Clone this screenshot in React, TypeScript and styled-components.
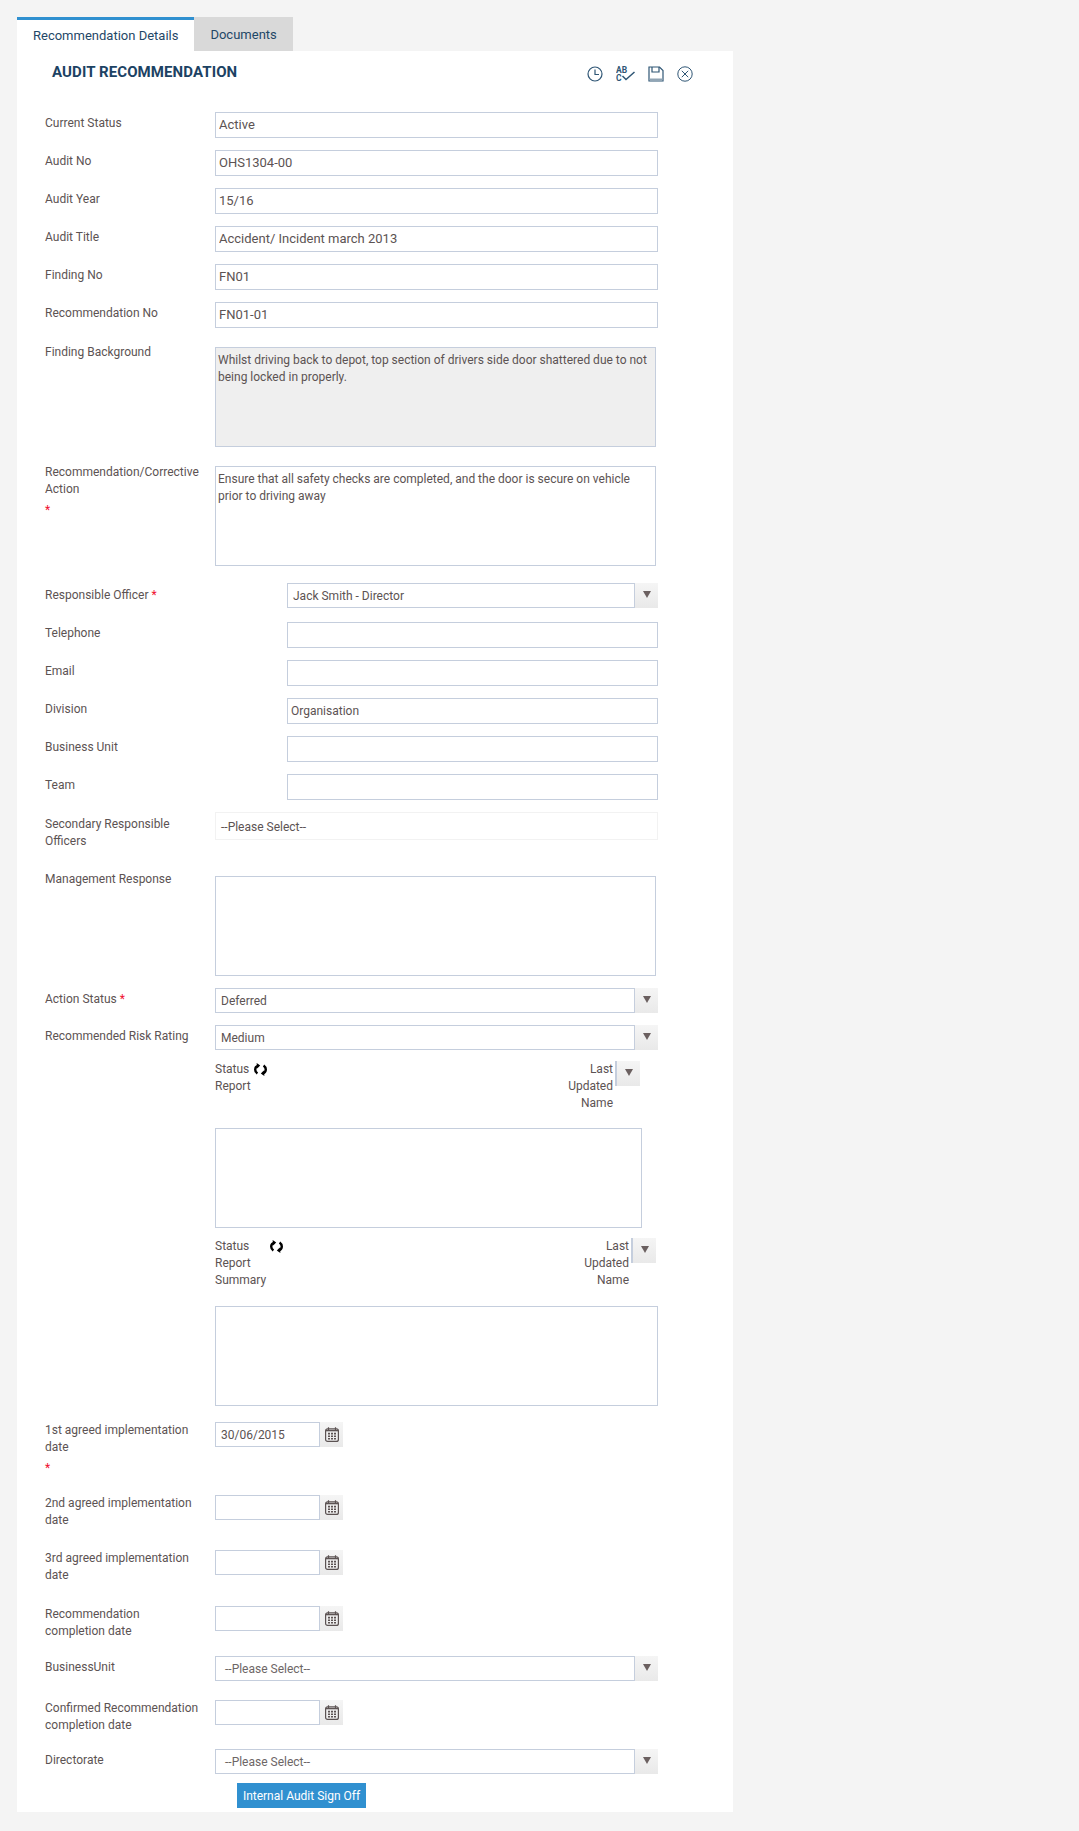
import styled, { createGlobalStyle } from "styled-components";

const GlobalStyle = createGlobalStyle`
  html, body {
    margin: 0;
    background: #f4f4f4;
    font-family: Roboto, "Liberation Sans", sans-serif;
    font-size: 12px;
    color: #5c5353;
  }
`;

const Page = styled.div`
  width: 716px;
  padding: 17px 0 19px 17px;
`;

const Tabs = styled.div`
  display: flex;
  height: 34px;
`;

const Tab = styled.div<{ $active?: boolean }>`
  box-sizing: border-box;
  padding: 0 16px;
  display: flex;
  align-items: center;
  font-size: 13px;
  color: #1f4767;
  background: ${(p) => (p.$active ? "#fff" : "#d9d9d9")};
  border-top: ${(p) => (p.$active ? "3px solid #3090d0" : "none")};
`;

const Panel = styled.div`
  background: #fff;
  height: 1761px;
  box-sizing: border-box;
`;

const Header = styled.div`
  height: 61px;
  display: flex;
  justify-content: space-between;
  align-items: flex-start;
  padding: 12px 40px 0 35px;
  box-sizing: border-box;
`;

const Title = styled.h1`
  margin: 0;
  font-size: 15px;
  letter-spacing: 0.1px;
  line-height: 18px;
  font-weight: 700;
  color: #1c4263;
`;

const Tools = styled.div`
  display: flex;
  align-items: flex-start;
  gap: 13px;
  margin-top: 3px;
`;

const Form = styled.div`
  padding-left: 28px;
  width: 613px;
`;

const Row = styled.div<{ $mb?: number }>`
  display: grid;
  grid-template-columns: 170px 1fr;
  align-items: start;
  margin-bottom: ${(p) => p.$mb ?? 12}px;
`;

const Label = styled.div<{ $top?: number }>`
  line-height: 17px;
  margin-top: ${(p) => p.$top ?? 3}px;
  padding-right: 14px;
`;

const Star = styled.span<{ $block?: boolean }>`
  color: #f01030;
  display: ${(p) => (p.$block ? "block" : "inline")};
  margin-top: ${(p) => (p.$block ? "4px" : "0")};
`;

const Input = styled.input<{ $large?: boolean }>`
  box-sizing: border-box;
  display: block;
  width: 100%;
  height: 26px;
  margin: 0;
  border: 1px solid #c5cedd;
  border-radius: 0;
  outline: none;
  padding: 0 3px ${(p) => (p.$large ? "2px" : "0")};
  font: inherit;
  font-size: ${(p) => (p.$large ? 13 : 12)}px;
  color: inherit;
  background: #fff;
`;

const OfficerField = styled.div`
  margin-left: 72px;
`;

const Area = styled.textarea<{ $w?: number; $disabled?: boolean }>`
  box-sizing: border-box;
  display: block;
  width: ${(p) => p.$w ?? 441}px;
  height: 100px;
  margin: 0;
  border: 1px solid #c5cedd;
  border-radius: 0;
  outline: none;
  resize: none;
  overflow: hidden;
  padding: 4px 2px;
  font: inherit;
  line-height: 17px;
  color: inherit;
  background: ${(p) => (p.$disabled ? "#efefef" : "#fff")};
`;

const Select = styled.div`
  display: flex;
  height: 25px;
`;

const SelectText = styled.div<{ $indent?: number; $muted?: boolean }>`
  box-sizing: border-box;
  flex: 1;
  border: 1px solid #c5cedd;
  display: flex;
  align-items: center;
  padding-left: ${(p) => p.$indent ?? 5}px;
  color: ${(p) => (p.$muted ? "#6d6666" : "inherit")};
`;

const ArrowBox = styled.div<{ $bordered?: boolean }>`
  box-sizing: border-box;
  width: ${(p) => (p.$bordered ? 25 : 23)}px;
  height: 25px;
  flex: none;
  display: flex;
  align-items: flex-start;
  justify-content: center;
  padding-top: 8px;
  background: linear-gradient(#f5f5f5, #e9e9e9);
  border-left: ${(p) => (p.$bordered ? "2px solid #c5cedd" : "none")};
`;

const Arrow = styled.div`
  width: 0;
  height: 0;
  border-left: 4px solid transparent;
  border-right: 4px solid transparent;
  border-top: 7px solid #6b6060;
`;

const PlainSelect = styled.div`
  box-sizing: border-box;
  height: 28px;
  border: 1px solid #f2f2f2;
  display: flex;
  align-items: center;
  padding: 2px 0 0 5px;
`;

const ReportHead = styled.div<{ $w: number; $h: number }>`
  display: flex;
  width: ${(p) => p.$w}px;
  height: ${(p) => p.$h}px;
  line-height: 17px;
`;

const ReportLabel = styled.div<{ $w: number }>`
  width: ${(p) => p.$w}px;
  flex: none;
`;

const RefreshSlot = styled.div`
  flex: 1;
  padding-top: 2px;
  svg {
    display: block;
  }
`;

const ReportName = styled.div`
  text-align: right;
  width: 55px;
  margin-right: 2px;
`;

const DateField = styled.div`
  display: flex;
  height: 25px;
`;

const DateInput = styled(Input)`
  width: 105px;
  height: 25px;
  padding: 0 5px;
`;

const CalendarBox = styled.div`
  width: 23px;
  height: 25px;
  display: flex;
  align-items: center;
  justify-content: center;
  background: linear-gradient(#f5f5f5, #e9e9e9);
`;

const SignOff = styled.button`
  display: block;
  margin: 9px 0 0 22px;
  width: 129px;
  height: 25px;
  padding: 0;
  border: none;
  background: #3090d0;
  color: #fff;
  font: inherit;
`;

const ClockIcon = () => (
  <svg width="16" height="16" viewBox="0 0 16 16" fill="none" stroke="#2f5675" strokeWidth="1.2">
    <circle cx="8" cy="8" r="7" />
    <path d="M8 3.5V8.5H12" />
  </svg>
);

const SpellIcon = () => (
  <svg width="19" height="16" viewBox="0 0 19 16" fill="#2f5675">
    <text x="0" y="7" fontSize="8.5" fontWeight="700" fontFamily="Roboto, sans-serif">AB</text>
    <text x="0" y="15" fontSize="8.5" fontWeight="700" fontFamily="Roboto, sans-serif">C</text>
    <path d="M6.5 10L10 13.5L18.5 6" fill="none" stroke="#2f5675" strokeWidth="1.5" />
  </svg>
);

const SaveIcon = () => (
  <svg width="16" height="16" viewBox="0 0 16 16" fill="none" stroke="#2f5675" strokeWidth="1.2">
    <path d="M1 1H11.5L15 4.5V15H1Z" />
    <path d="M4 1V6H11V1" />
    <path d="M1.5 13.5H14.5" stroke="#8fa3b3" strokeWidth="2" />
  </svg>
);

const CloseIcon = () => (
  <svg width="16" height="16" viewBox="0 0 16 16" fill="none" stroke="#2f5675" strokeWidth="1">
    <circle cx="8" cy="8" r="7.2" />
    <path d="M4.8 4.8L11.2 11.2M11.2 4.8L4.8 11.2" />
  </svg>
);

const RefreshIcon = () => (
  <svg width="13" height="13" viewBox="0 0 13 13">
    <path d="M4.5 2.6C2.2 3.1 1.2 4.8 1.2 6.5C1.2 8.2 2 9.6 3.4 10.6" fill="none" stroke="#000" strokeWidth="2.4" />
    <path d="M2.6 0L6.2 2.6L3.2 5.6Z" fill="#000" />
    <path d="M8.5 10.4C10.8 9.9 11.8 8.2 11.8 6.5C11.8 4.8 11 3.4 9.6 2.4" fill="none" stroke="#000" strokeWidth="2.4" />
    <path d="M10.4 13L6.8 10.4L9.8 7.4Z" fill="#000" />
  </svg>
);

const CalendarIcon = () => (
  <svg width="14" height="15" viewBox="0 0 14 15">
    <rect x="0.6" y="1.8" width="12.8" height="12.6" rx="2" fill="none" stroke="#5c5353" strokeWidth="1.2" />
    <path d="M1 3.6H13" stroke="#5c5353" strokeWidth="1.4" />
    <path d="M3.5 0.3V3M10.5 0.3V3" stroke="#5c5353" strokeWidth="1.2" />
    <path
      d="M3 5.8h2v1.6H3zM6 5.8h2v1.6H6zM9 5.8h2v1.6H9zM3 8.4h2v1.6H3zM6 8.4h2v1.6H6zM9 8.4h2v1.6H9zM3 11h2v1.6H3zM6 11h2v1.6H6zM9 11h2v1.6H9z"
      fill="#5c5353"
    />
  </svg>
);

const textRows = [
  { label: "Current Status", value: "Active" },
  { label: "Audit No", value: "OHS1304-00" },
  { label: "Audit Year", value: "15/16" },
  { label: "Audit Title", value: "Accident/ Incident march 2013" },
  { label: "Finding No", value: "FN01" },
  { label: "Recommendation No", value: "FN01-01" },
];

const officerRows = [
  { label: "Telephone", value: "" },
  { label: "Email", value: "" },
  { label: "Division", value: "Organisation" },
  { label: "Business Unit", value: "" },
  { label: "Team", value: "" },
];

function DropArrow({ bordered }: { bordered?: boolean }) {
  return (
    <ArrowBox $bordered={bordered}>
      <Arrow />
    </ArrowBox>
  );
}

function DateRow({ label, value, mb, star }: { label: string; value?: string; mb: number; star?: boolean }) {
  return (
    <Row $mb={mb}>
      <Label $top={0}>
        {label}
        {star ? <Star $block>*</Star> : null}
      </Label>
      <DateField>
        <DateInput readOnly value={value ?? ""} />
        <CalendarBox>
          <CalendarIcon />
        </CalendarBox>
      </DateField>
    </Row>
  );
}

export default function App() {
  return (
    <Page>
      <GlobalStyle />
      <Tabs>
        <Tab $active>Recommendation Details</Tab>
        <Tab>Documents</Tab>
      </Tabs>
      <Panel>
        <Header>
          <Title>AUDIT RECOMMENDATION</Title>
          <Tools>
            <ClockIcon />
            <SpellIcon />
            <SaveIcon />
            <CloseIcon />
          </Tools>
        </Header>
        <Form>
          {textRows.map((row, i) => (
            <Row key={row.label} $mb={i === 5 ? 19 : 12}>
              <Label>{row.label}</Label>
              <Input $large readOnly value={row.value} />
            </Row>
          ))}
          <Row $mb={19}>
            <Label $top={-3}>Finding Background</Label>
            <Area
              $disabled
              readOnly
              value="Whilst driving back to depot, top section of drivers side door shattered due to not being locked in properly."
            />
          </Row>
          <Row $mb={17}>
            <Label $top={-2}>
              Recommendation/Corrective Action
              <Star $block>*</Star>
            </Label>
            <Area
              readOnly
              value="Ensure that all safety checks are completed, and the door is secure on vehicle prior to driving away"
            />
          </Row>
          <Row $mb={14}>
            <Label $top={4}>
              Responsible Officer <Star>*</Star>
            </Label>
            <OfficerField>
              <Select>
                <SelectText>Jack Smith - Director</SelectText>
                <DropArrow />
              </Select>
            </OfficerField>
          </Row>
          {officerRows.map((row) => (
            <Row key={row.label}>
              <Label>{row.label}</Label>
              <OfficerField>
                <Input readOnly value={row.value} />
              </OfficerField>
            </Row>
          ))}
          <Row $mb={26}>
            <Label $top={4}>Secondary Responsible Officers</Label>
            <PlainSelect>--Please Select--</PlainSelect>
          </Row>
          <Row $mb={12}>
            <Label $top={-5}>Management Response</Label>
            <Area readOnly value="" />
          </Row>
          <Row $mb={12}>
            <Label>
              Action Status <Star>*</Star>
            </Label>
            <Select>
              <SelectText>Deferred</SelectText>
              <DropArrow />
            </Select>
          </Row>
          <Row $mb={11}>
            <Label>Recommended Risk Rating</Label>
            <Select>
              <SelectText>Medium</SelectText>
              <DropArrow />
            </Select>
          </Row>
          <Row $mb={10}>
            <div />
            <div>
              <ReportHead $w={425} $h={67}>
                <ReportLabel $w={39}>
                  Status
                  <br />
                  Report
                </ReportLabel>
                <RefreshSlot>
                  <RefreshIcon />
                </RefreshSlot>
                <ReportName>
                  Last
                  <br />
                  Updated
                  <br />
                  Name
                </ReportName>
                <DropArrow bordered />
              </ReportHead>
              <Area $w={427} readOnly value="" />
            </div>
          </Row>
          <Row $mb={16}>
            <div />
            <div>
              <ReportHead $w={441} $h={68}>
                <ReportLabel $w={55}>
                  Status
                  <br />
                  Report
                  <br />
                  Summary
                </ReportLabel>
                <RefreshSlot>
                  <RefreshIcon />
                </RefreshSlot>
                <ReportName>
                  Last
                  <br />
                  Updated
                  <br />
                  Name
                </ReportName>
                <DropArrow bordered />
              </ReportHead>
              <Area $w={443} readOnly value="" />
            </div>
          </Row>
          <DateRow label="1st agreed implementation date" value="30/06/2015" star mb={18} />
          <DateRow label="2nd agreed implementation date" mb={21} />
          <DateRow label="3rd agreed implementation date" mb={22} />
          <DateRow label="Recommendation completion date" mb={16} />
          <Row $mb={19}>
            <Label>BusinessUnit</Label>
            <Select>
              <SelectText $indent={9} $muted>
                --Please Select--
              </SelectText>
              <DropArrow />
            </Select>
          </Row>
          <DateRow label="Confirmed Recommendation completion date" mb={15} />
          <Row $mb={0}>
            <Label>Directorate</Label>
            <Select>
              <SelectText $indent={9} $muted>
                --Please Select--
              </SelectText>
              <DropArrow />
            </Select>
          </Row>
          <Row $mb={0}>
            <div />
            <SignOff>Internal Audit Sign Off</SignOff>
          </Row>
        </Form>
      </Panel>
    </Page>
  );
}
